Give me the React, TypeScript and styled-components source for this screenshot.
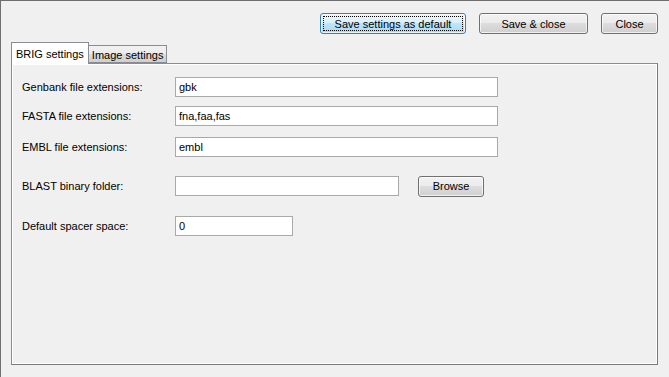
import React from 'react';
import styled, { createGlobalStyle } from 'styled-components';

const GlobalStyle = createGlobalStyle`
  html, body {
    margin: 0;
    padding: 0;
    background: #f0f0f0;
  }
  body {
    font-family: "Liberation Sans", Arial, sans-serif;
    font-size: 11px;
    color: #000000;
  }
`;

const Window = styled.div`
  width: 669px;
  height: 377px;
  box-sizing: border-box;
  background: #f0f0f0;
  border-top: 1px solid #6e6e6e;
  border-left: 1px solid #707070;
  overflow: hidden;
`;

const Toolbar = styled.div`
  display: flex;
  justify-content: flex-end;
  gap: 13px;
  padding: 12px 11px 0 0;
`;

const Button = styled.button<{ $w: number; $primary?: boolean }>`
  position: relative;
  width: ${p => p.$w}px;
  height: 21px;
  box-sizing: border-box;
  border: 1px solid ${p => (p.$primary ? '#3c7fb1' : '#707070')};
  border-radius: 3px;
  font-family: inherit;
  font-size: 11px;
  color: #000;
  padding: 0;
  background: ${p =>
    p.$primary
      ? 'linear-gradient(to bottom, #eaf6fd 0%, #d9f0fc 50%, #bee6fd 50%, #a7d9f5 100%)'
      : 'linear-gradient(to bottom, #f2f2f2 0%, #ebebeb 50%, #dddddd 50%, #cfcfcf 100%)'};
  box-shadow: inset 0 0 0 1px rgba(255, 255, 255, 0.7);
  &::after {
    content: '';
    display: ${p => (p.$primary ? 'block' : 'none')};
    position: absolute;
    inset: 2px;
    border: 1px dotted #000;
  }
`;

const TabStrip = styled.div`
  display: flex;
  align-items: flex-end;
  margin: 8px 0 0 10px;
  height: 21px;
  position: relative;
  z-index: 1;
`;

const Tab = styled.div<{ $active?: boolean }>`
  box-sizing: border-box;
  height: ${p => (p.$active ? 22 : 18)}px;
  padding: 1px ${p => (p.$active ? 4 : 3)}px 0;
  margin-bottom: ${p => (p.$active ? -1 : 0)}px;
  display: flex;
  align-items: center;
  border: 1px solid #898c95;
  border-bottom: ${p => (p.$active ? 'none' : '1px solid #898c95')};
  border-left: ${p => (p.$active ? '1px solid #898c95' : 'none')};
  background: ${p =>
    p.$active ? '#ffffff' : 'linear-gradient(to bottom, #f2f2f2 0%, #ebebeb 50%, #dddddd 50%, #cfcfcf 100%)'};
  font-size: 11px;
`;

const Panel = styled.div`
  box-sizing: border-box;
  margin: 0 0 0 10px;
  width: 647px;
  height: 302px;
  border: 1px solid #898c95;
  border-right-color: #7a7a7a;
  border-bottom-color: #7a7a7a;
  box-shadow: inset 1px 1px 0 #ffffff, inset -1px -1px 0 #ffffff;
  background: #f0f0f0;
  padding: 13px 0 0 10px;
`;

const Row = styled.div<{ $gap: number }>`
  display: flex;
  align-items: center;
  margin-top: ${p => p.$gap}px;
  height: 20px;
`;

const Label = styled.div`
  width: 153px;
  font-size: 11px;
  white-space: nowrap;
`;

const Field = styled.div<{ $w: number }>`
  box-sizing: border-box;
  width: ${p => p.$w}px;
  height: 20px;
  background: #ffffff;
  border: 1px solid #a9a9a9;
  padding: 0 3px;
  display: flex;
  align-items: center;
  font-size: 11px;
`;

const BrowseButton = styled(Button)`
  margin-left: 19px;
`;

export default function App() {
  return (
    <>
      <GlobalStyle />
      <Window>
        <Toolbar>
          <Button $w={146} $primary>Save settings as default</Button>
          <Button $w={109}>Save &amp; close</Button>
          <Button $w={57}>Close</Button>
        </Toolbar>
        <TabStrip>
          <Tab $active>BRIG settings</Tab>
          <Tab>Image settings</Tab>
        </TabStrip>
        <Panel>
          <Row $gap={0}>
            <Label>Genbank file extensions:</Label>
            <Field $w={323}>gbk</Field>
          </Row>
          <Row $gap={9}>
            <Label>FASTA file extensions:</Label>
            <Field $w={323}>fna,faa,fas</Field>
          </Row>
          <Row $gap={11}>
            <Label>EMBL file extensions:</Label>
            <Field $w={323}>embl</Field>
          </Row>
          <Row $gap={19}>
            <Label>BLAST binary folder:</Label>
            <Field $w={224}></Field>
            <BrowseButton $w={66}>Browse</BrowseButton>
          </Row>
          <Row $gap={20}>
            <Label>Default spacer space:</Label>
            <Field $w={118}>0</Field>
          </Row>
        </Panel>
      </Window>
    </>
  );
}
